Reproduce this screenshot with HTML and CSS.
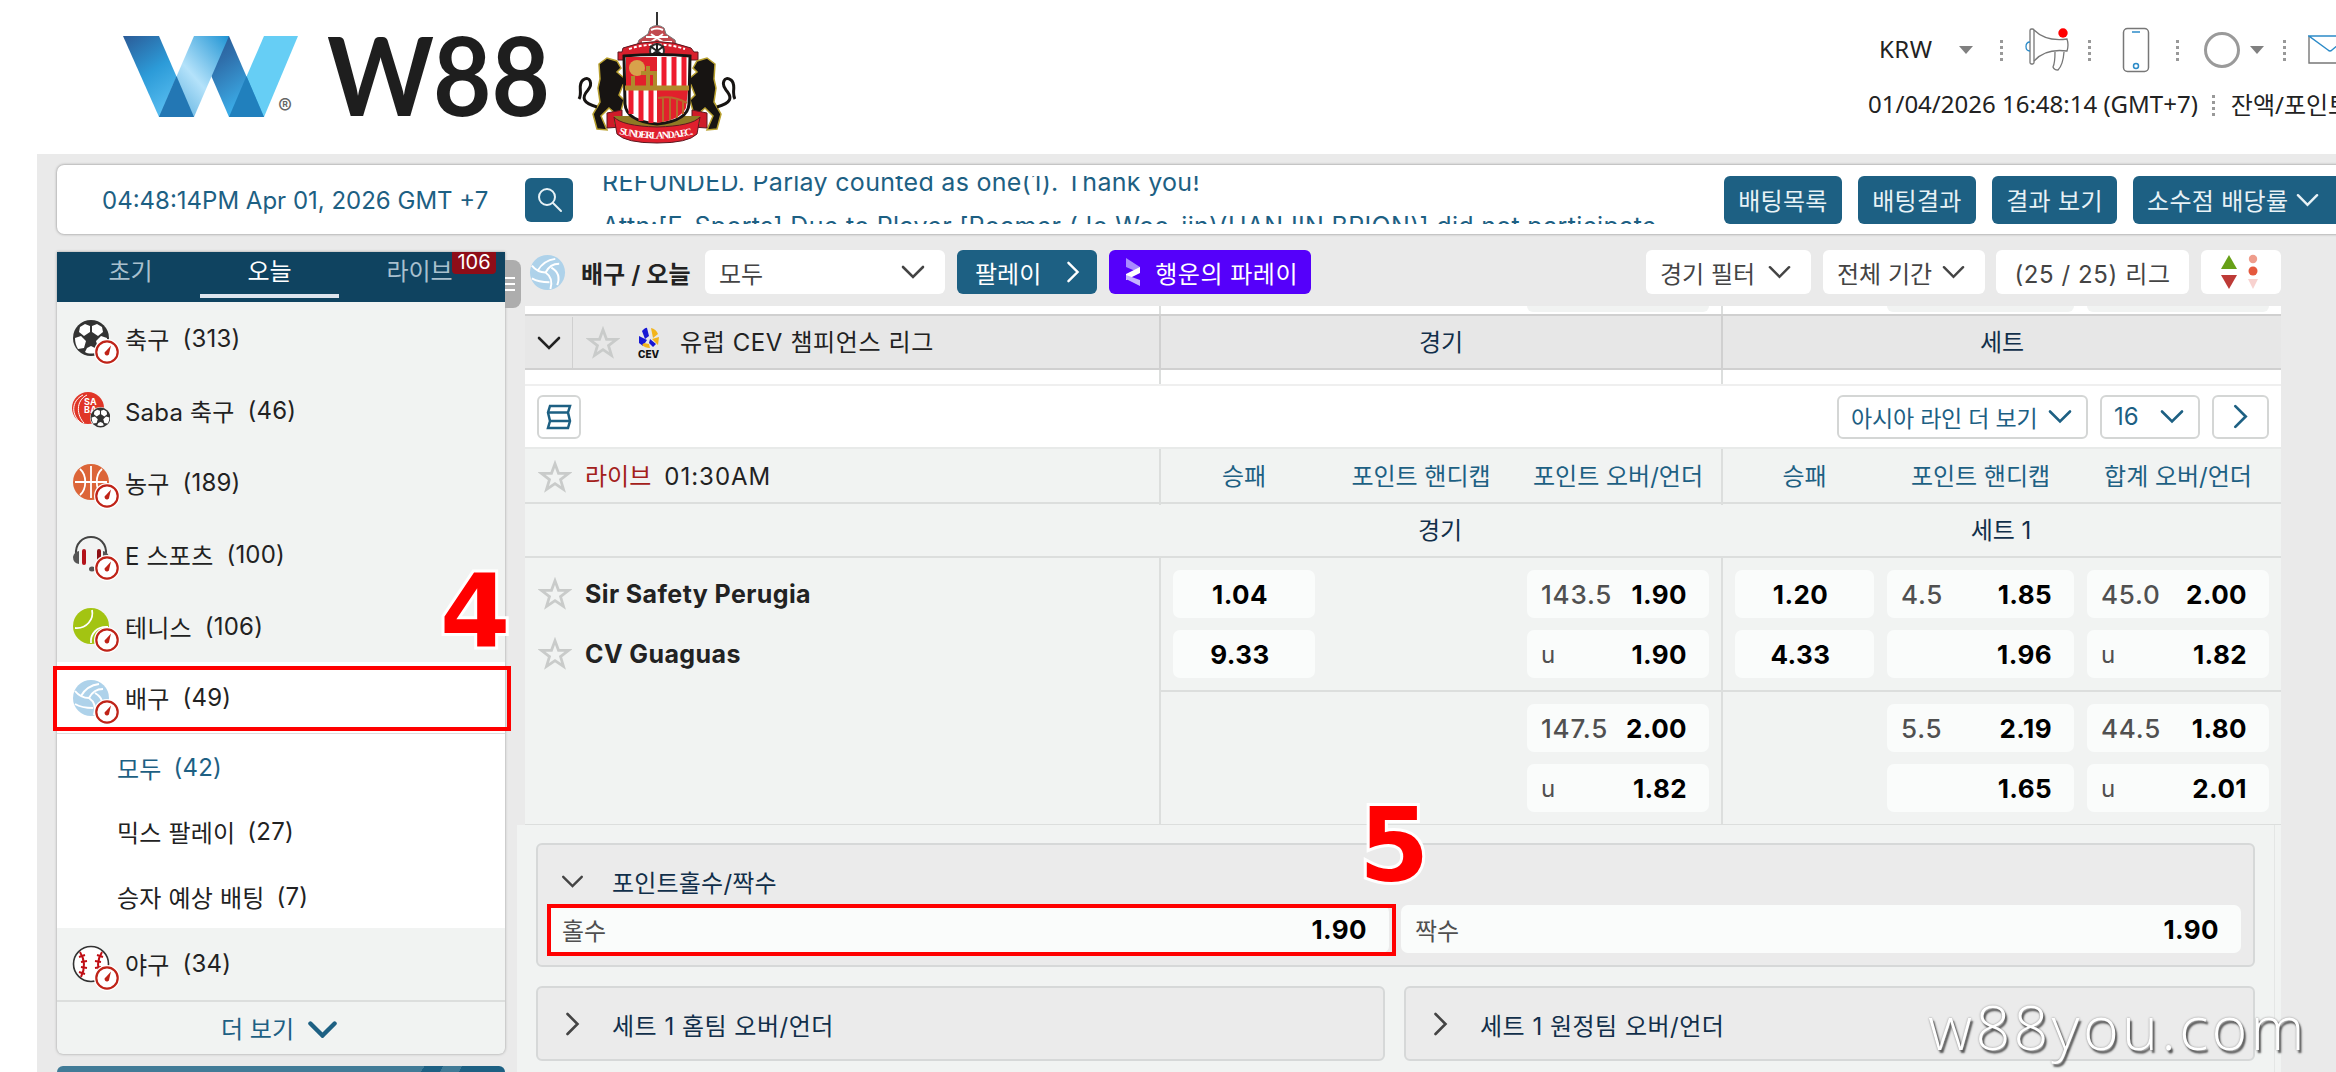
FILE: index.html
```
<!doctype html>
<html lang="ko">
<head>
<meta charset="utf-8" />
<title>W88 - 배구 / 오늘</title>
<link rel="stylesheet" href="styles.css">
</head>
<body>

<!-- icon sprite -->
<svg class="sprite" width="0" height="0">
	<symbol id="down" viewBox="0 0 24 14"><path d="M2 2l10 10L22 2" fill="none" stroke="currentColor" stroke-linecap="round"/></symbol>
	<symbol id="right" viewBox="0 0 14 24"><path d="M2 2l10 10L2 22" fill="none" stroke="currentColor" stroke-linecap="round"/></symbol>
	<symbol id="star" viewBox="0 0 32 32"><path d="M16 3.500l3.300 9h9.600l-7.700 5.900 2.800 9.300-8-5.500-8 5.500 2.800-9.300L3.100 12.500h9.600z" fill="none" stroke="currentColor"/></symbol>
	<symbol id="clock" viewBox="0 0 26 26"><circle cx="13" cy="13" r="13" fill="#fff"/><circle cx="13" cy="13" r="10.700" fill="#fff" stroke="#bf2318" stroke-width="2.200"/><path d="M17 6.500l-1.700 7.300a2.400 2.400 0 1 1-3.300-1.900z" fill="#bf2318"/></symbol>
	<symbol id="soccer" viewBox="0 0 38 38"><circle cx="19" cy="19" r="18" fill="#333"/><g fill="#fff"><path d="M13 5l5 2v6l-6 4-5-4 1-5zM25 5l5 3 1 5-5 4-6-4V7zM3 19l6-2 5 5-2 7-6 1c-2-3-3-7-3-11zM35 19l-6-2-5 5 2 7 6 1c2-3 3-7 3-11zM15 29l4-2 4 2 2 4c-3 2-9 2-12 0z"/></g></symbol>
	<symbol id="volley" viewBox="0 0 38 38"><circle cx="19" cy="19" r="18" fill="#aed2ea"/><g fill="none" stroke="#fff" stroke-width="2"><path d="M3 12c4 5 8 7 14 7M9 17C13 10 19 6 27 5M17 19c3-6 8-9 14-9M17 19c6 4 7 10 5 17M23 14c7 4 9 10 6 18M3 25c5 3 10 4 18 4"/></g></symbol>
</svg>

<header class="siteHeader">
	<div class="brand">
		<svg class="mark" width="178" height="84" viewBox="0 0 178 84">
			<defs>
				<linearGradient id="g1" x2=".6" y2="1"><stop stop-color="#2b5b97"/><stop offset=".5" stop-color="#2c9bd8"/><stop offset="1" stop-color="#5cc0f2"/></linearGradient>
				<linearGradient id="g2" x1="1" x2="0" y2="1"><stop stop-color="#1f94d4"/><stop offset=".5" stop-color="#b4e2fa"/><stop offset="1" stop-color="#3f9fd6"/></linearGradient>
				<linearGradient id="g3" x2=".6" y2="1"><stop stop-color="#274f8b"/><stop offset=".4" stop-color="#2f6fab"/><stop offset="1" stop-color="#3db5f0"/></linearGradient>
			</defs>
			<path d="M106 82h35L175 1h-34z" fill="#66cef5"/>
			<path d="M71 1h35l35 81h-35z" fill="url(#g3)"/>
			<path d="M106 82h35l-17.500-41z" fill="#2180bd"/>
			<path d="M0 1h36l35 81H36z" fill="url(#g1)"/>
			<path d="M36 82h35l35-81H71z" fill="url(#g2)"/>
			<path d="M36 82h35L53.500 41z" fill="#2377b4"/>
			<text x="155" y="79" class="reg">®</text>
		</svg>
		<svg class="wordmark" width="230" height="122" viewBox="0 0 230 122"><text x="0" y="106"><tspan textLength="107" lengthAdjust="spacingAndGlyphs">W</tspan><tspan x="106" textLength="117" lengthAdjust="spacingAndGlyphs">88</tspan></text></svg>
		<svg class="crest" width="160" height="134" viewBox="0 0 160 134">
			<path d="M81 2v14" stroke="#333" stroke-width="2"/>
			<path d="M74 18q7-5 14 0l2 6 9 6 2 8q-20-5-41 0l3-8 9-6z" fill="#c3494f" stroke="#777"/>
			<path d="M75 20q6-3 12 0M70 27h22M66 32h30M75 24l12 8M87 24l-12 8" stroke="#fff" stroke-width="2" fill="none"/>
			<path d="M47 38q34-13 68 0l3 4h4v8h-15l-6-5H61l-6 5H42v-8h4z" fill="#d8202d" stroke="#5c1820"/>
			<path d="M53 39q28-9 56 0" stroke="#fff" stroke-width="2" stroke-dasharray="3 2" fill="none"/>
			<circle cx="81" cy="41" r="7" fill="#fff" stroke="#333" stroke-width="2"/><path d="M74 36l14 10M88 36L74 46M81 33v16" stroke="#222" stroke-width="2"/>
			<g fill="#171412" stroke="#b8a02f" stroke-width="1.500">
				<path d="M23 54l8-6 10 3 4 7-4 4 6 5 6-6 3 5-9 9-4 10 5 5-3 11-5 3-7-6-8 8 6 14-10-1-4-15 7-12-2-14 2-9z"/>
				<path d="M139 54l-8-6-10 3-4 7 4 4-6 5-6-6-3 5 9 9 4 10-5 5 3 11 5 3 7-6 8 8-6 14 10-1 4-15-7-12 2-14-2-9z"/>
				<path d="M21 97c-14-4-16-9-9-17 5-6 2-15-5-10-6 5 0 12-4 19" fill="none" stroke="#171412" stroke-width="3"/>
				<path d="M141 97c14-4 16-9 9-17-5-6-2-15 5-10 6 5 0 12 4 19" fill="none" stroke="#171412" stroke-width="3"/>
			</g>
			<path d="M31 103l15-3v17l-15 1zM131 103l-15-3v17l15 1z" fill="#cf1b29" stroke="#5c1820"/>
			<path d="M38 106h86v8l-20 3H58l-20-3z" fill="#8f7a24"/>
			<path d="M48 46q34-3 66 0l-1 48q-1 17-32 20-31-3-32-20z" fill="#fff" stroke="#171412" stroke-width="3"/>
			<path d="M50 47h31v30H50z" fill="#e2202c"/>
			<circle cx="61" cy="58" r="8" fill="#d8a24b"/><path d="M57 66v12M65 63h14v14M72 56v20" stroke="#b08a2c" stroke-width="4" fill="none"/>
			<path d="M88 47v30M98 47v30M108 47v30M55 80v24M65 80v31M75 80v33" stroke="#ee1c2e" stroke-width="5"/>
			<path d="M81 80h31l-2 18q-6 12-29 15z" fill="#e2202c"/>
			<path d="M82 88q15-3 29 5M87 88v24M94 88v22M101 90v18M107 92v12" stroke="#b86a2c" stroke-width="2" fill="none"/>
			<path d="M49 78h64" stroke="#b08a2c" stroke-width="5"/>
			<path d="M38 107q8 9 43 10 35-1 43-10l-3 17q-9 9-40 9t-40-9z" fill="#e01f2d" stroke="#5c1820"/>
			<path id="scroll" d="M43 124q38 9 76 0" fill="none"/>
			<text class="motto"><textPath href="#scroll" textLength="75">SUNDERLAND A.F.C.</textPath></text>
		</svg>
	</div>
	<div class="account">
		<div class="accountTools">
			<span class="krw">KRW</span><i class="caret"></i><i class="dots"></i>
			<svg class="horn" width="46" height="46" viewBox="0 0 46 46" fill="none" stroke="#777" stroke-width="1.300"><rect x="5" y="2" width="4" height="35" rx="1.500"/><path d="M9 3c8 8 18 11 33 9q2 6 0 12c-15-2-25 1-33 10M30 25c0 6 0 11-2 15q1 3 5 3 5-5 6-18"/><path d="M5 15q-4 0-4 4.500T5 24" stroke="#2c8bc8"/><circle cx="38" cy="6" r="4.700" fill="#f00" stroke="none"/></svg>
			<i class="dots"></i>
			<svg class="phone" width="28" height="46" viewBox="0 0 28 46" fill="none" stroke="#777" stroke-width="1.500"><rect x="1.500" y="1.500" width="25" height="43" rx="4"/><path d="M10 5h8" stroke="#2c8bc8"/><circle cx="14" cy="39" r="2.500" stroke="#2c8bc8"/></svg>
			<i class="dots"></i><i class="ring"></i><i class="caret caretRing"></i><i class="dots"></i>
			<svg class="mail" width="42" height="30" viewBox="0 0 42 30" fill="none" stroke="#777" stroke-width="1.400"><path d="M1 1v27h40V1"/><path d="M1 1h40L24 15q-2 2-4 0z" stroke="#2c8bc8"/></svg>
		</div>
		<div class="accountInfo"><span class="stamp">01/04/2026 16:48:14 (GMT+7)</span><i class="dots"></i><span>잔액/포인트</span></div>
	</div>
</header>

<div class="stage">
	<div class="notice">
		<time>04:48:14PM Apr 01, 2026 GMT +7</time>
		<button class="btn search"><svg width="28" height="28" viewBox="0 0 28 28" fill="none" stroke="currentColor" stroke-width="2"><circle cx="12" cy="11" r="8"/><path d="M18 17l8 8" stroke-linecap="round"/></svg></button>
		<div class="ticker">
			<p>REFUNDED. Parlay counted as one(1). Thank you!</p>
			<p>Attn:[E-Sports] Due to Player [Roamer (Jo Woo-jin)(HANJIN BRION)] did not participate</p>
		</div>
		<button class="btn">배팅목록</button>
		<button class="btn">배팅결과</button>
		<button class="btn result">결과 보기</button>
		<button class="btn odds">소수점 배당률<svg width="23" height="14"><use href="#down"/></svg></button>
	</div>

	<div class="columns">
		<aside>
			<div class="sports">
				<nav class="tabs">
					<a>초기</a><a class="on">오늘</a><a>라이브<b>106</b></a>
				</nav>
				<i class="handle"></i>
				<ul>
					<li><span class="ico"><svg width="38" height="38"><use href="#soccer"/></svg><svg class="live" width="26" height="26"><use href="#clock"/></svg></span>축구<em>(313)</em></li>
					<li><span class="ico"><svg width="38" height="38" viewBox="0 0 38 38"><circle cx="16" cy="17" r="16" fill="#e03527"/><path d="M11 4c-12 6-12 20-2 28M15 4C3 10 5 25 12 32" fill="none" stroke="#fff"/><text x="12" y="14" class="saba">SA</text><text x="12" y="22" class="saba">BA</text><svg x="18" y="16" width="21" height="21"><circle cx="10.500" cy="10.500" r="10.500" fill="#f1f3f2"/><use href="#soccer"/></svg></svg></span>Saba 축구<em>(46)</em></li>
					<li><span class="ico"><svg width="38" height="38" viewBox="0 0 38 38"><circle cx="19" cy="19" r="18" fill="#dc6538"/><path d="M19 3v32M3 19h32M8 6c7 6 7 20 0 26M30 6c-7 6-7 20 0 26" fill="none" stroke="#fff" stroke-width="1.800"/></svg><svg class="live" width="26" height="26"><use href="#clock"/></svg></span>농구<em>(189)</em></li>
					<li><span class="ico"><svg width="38" height="38" viewBox="0 0 38 38"><path d="M4 20C2-4 36-4 34 20" fill="none" stroke="#444" stroke-width="2"/><path d="M7 16v13q-6-1-6-7 1-5 6-6zM31 16v13q6-1 6-7-1-5-6-6z" fill="#555"/><rect x="10" y="14" width="4" height="16" rx="2" fill="#b3121a"/><rect x="25" y="14" width="4" height="16" rx="2" fill="#8d1015"/><ellipse cx="20" cy="34" rx="3" ry="2.500" fill="#555"/></svg><svg class="live" width="26" height="26"><use href="#clock"/></svg></span>E 스포츠<em>(100)</em></li>
					<li><span class="ico"><svg width="38" height="38" viewBox="0 0 38 38"><circle cx="19" cy="19" r="18" fill="#a3c412"/><path d="M20 3c2 9-5 19-17 18M36 20c-11-1-18 7-17 16" fill="none" stroke="#fff" stroke-width="1.800"/></svg><svg class="live" width="26" height="26"><use href="#clock"/></svg></span>테니스<em>(106)</em></li>
					<li class="open"><span class="ico"><svg width="38" height="38"><use href="#volley"/></svg><svg class="live" width="26" height="26"><use href="#clock"/></svg></span>배구<em>(49)</em><i class="mark4"></i><strong class="num num4">4</strong></li>
				</ul>
				<ul class="sub">
					<li class="on">모두<em>(42)</em></li>
					<li>믹스 팔레이<em>(27)</em></li>
					<li>승자 예상 배팅<em>(7)</em></li>
				</ul>
				<ul>
					<li><span class="ico"><svg width="38" height="38" viewBox="0 0 38 38"><circle cx="19" cy="19" r="17.500" fill="#fff" stroke="#333" stroke-width="1.600"/><path d="M8 7c5 8 5 17 1 25M30 7c-5 8-5 17-1 25" fill="none" stroke="#c00f16" stroke-width="2"/><path d="M7 12l6-2M9 17l6-1M9 22l6 1M7 27l6 2M31 12l-6-2M29 17l-6-1M29 22l-6 1" stroke="#c00f16" stroke-width="2"/></svg><svg class="live" width="26" height="26"><use href="#clock"/></svg></span>야구<em>(34)</em></li>
				</ul>
				<a class="more">더 보기<svg width="29" height="17"><use href="#down"/></svg></a>
			</div>
			<div class="promo"></div>
		</aside>

		<main>
			<div class="filters">
				<svg width="37" height="37"><use href="#volley"/></svg>
				<h1>배구 / 오늘</h1>
				<span class="pick all">모두<svg width="24" height="14"><use href="#down"/></svg></span>
				<a class="parlay">팔레이<svg width="14" height="22"><use href="#right"/></svg></a>
				<a class="parlay lucky"><svg width="16" height="28" viewBox="0 0 16 28"><path d="M1 0l14 9v6L1 9z" fill="#a98bff"/><path d="M15 9v6L1 22v-6z" fill="#fff"/><path d="M1 17l14 5v6L1 21z" fill="#c7b3ff"/></svg>행운의 파레이</a>
				<span class="pick game">경기 필터<svg width="23" height="14"><use href="#down"/></svg></span>
				<span class="pick period">전체 기간<svg width="23" height="14"><use href="#down"/></svg></span>
				<span class="pick leagues">(25 / 25) 리그</span>
				<span class="pick sort"><svg width="46" height="38" viewBox="0 0 46 38"><path d="M3 16L11 2l8 14z" fill="#67a017"/><path d="M3 22l8 14 8-14z" fill="#bd3a36"/><circle cx="35" cy="6" r="4.200" fill="#ef9d8c"/><circle cx="35" cy="18" r="4.500" fill="#e5593d"/><path d="M30 26h10l-5 10z" fill="#f8d2cf"/></svg></span>
			</div>

			<div class="board">
				<div class="row peek"><div></div><div class="cells game3"><i></i><i></i><i class="pill"></i></div><div class="cells set3"><i></i><i class="pill"></i><i class="pill"></i></div></div>
				<div class="row league">
					<div class="name"><span class="fold"><svg width="24" height="14"><use href="#down"/></svg></span><svg class="star" width="34" height="34"><use href="#star"/></svg>
						<svg class="cev" width="24" height="32" viewBox="0 0 24 32"><path d="M5 4Q9 0 10 1l2 8-4 3zM2 9l8 4-4 6-4-3zM13 12l6 5-3 3-4-4z" fill="#1717d4"/><path d="M14 1q5 1 7 6l-5 4zM22 10l-1 8-6-6zM7 16l5 1 1 4q-5 0-8-3z" fill="#f2b41b"/><text x="1" y="31">CEV</text></svg>
						<span>유럽 CEV 챔피언스 리그</span></div>
					<div>경기</div><div>세트</div>
				</div>
				<div class="row gap"><div></div><div></div><div></div></div>
				<div class="tools">
					<span class="box stack"><svg width="26" height="26" viewBox="0 0 26 26" fill="none" stroke="currentColor" stroke-width="2.500"><path d="M4 2h20l-2 6.500 2 8.500-2 7H2l2-7-2-8.500z"/><path d="M2 8.500h20M4 17h20"/></svg></span>
					<span class="box lines">아시아 라인 더 보기<svg width="24" height="15"><use href="#down"/></svg></span>
					<span class="box page">16<svg width="24" height="15"><use href="#down"/></svg></span>
					<span class="box next"><svg width="15" height="25"><use href="#right"/></svg></span>
				</div>
				<div class="row head">
					<div class="name"><svg class="star" width="34" height="34"><use href="#star"/></svg><b>라이브</b><time>01:30AM</time></div>
					<div class="cells game3"><span>승패</span><span>포인트 핸디캡</span><span>포인트 오버/언더</span></div>
					<div class="cells set3"><span>승패</span><span>포인트 핸디캡</span><span>합계 오버/언더</span></div>
				</div>
				<div class="row half"><div></div><div>경기</div><div>세트 1</div></div>
				<div class="row match">
					<div class="teams">
						<p><svg class="star" width="34" height="34"><use href="#star"/></svg>Sir Safety Perugia</p>
						<p><svg class="star" width="34" height="34"><use href="#star"/></svg>CV Guaguas</p>
					</div>
					<div class="cells game3">
						<span class="pill solo">1.04</span><i></i><span class="pill"><s>143.5</s>1.90</span>
						<span class="pill solo">9.33</span><i></i><span class="pill"><s class="u">u</s>1.90</span>
					</div>
					<div class="cells set3">
						<span class="pill solo">1.20</span><span class="pill"><s>4.5</s>1.85</span><span class="pill"><s>45.0</s>2.00</span>
						<span class="pill solo">4.33</span><span class="pill"><s></s>1.96</span><span class="pill"><s class="u">u</s>1.82</span>
					</div>
					<div class="cells game3">
						<i></i><i></i><span class="pill"><s>147.5</s>2.00</span>
						<i></i><i></i><span class="pill"><s class="u">u</s>1.82</span>
					</div>
					<div class="cells set3">
						<i></i><span class="pill"><s>5.5</s>2.19</span><span class="pill"><s>44.5</s>1.80</span>
						<i></i><span class="pill"><s></s>1.65</span><span class="pill"><s class="u">u</s>2.01</span>
					</div>
				</div>
			</div>

			<div class="markets">
				<section class="wide">
					<h2><svg width="23" height="13"><use href="#down"/></svg>포인트홀수/짝수</h2>
					<div class="pair">
						<span class="pill"><s class="u">홀수</s>1.90<i class="mark5"></i><strong class="num num5">5</strong></span>
						<span class="pill"><s class="u">짝수</s>1.90</span>
					</div>
				</section>
				<section><h2><svg width="15" height="24"><use href="#right"/></svg>세트 1 홈팀 오버/언더</h2></section>
				<section><h2><svg width="15" height="24"><use href="#right"/></svg>세트 1 원정팀 오버/언더</h2></section>
			</div>
		</main>
	</div>
</div>

<div class="watermark">w88you.com</div>

</body>
</html>
```
FILE: styles.css
```
:root {
	--blue: #1d6083;
	--navy: #0f4360;
	--page: #eaeaea;
	--panel: #f1f3f2;
	--line: #dcdedd;
	font-family: Inter, "Noto Sans CJK KR", sans-serif;
	font-size: 24px;
	color: #222;
}

* {
	box-sizing: border-box;
}

body, html, p, h1, h2, ul {
	margin: 0;
	padding: 0;
}

body {
	width: 2336px;
	height: 1072px;
	overflow: hidden;
	position: relative;
	background: #fff;
}

ul { list-style: none; }
em, i, s { font-style: normal; text-decoration: none; }
svg { flex: none; display: block; }
use { stroke-width: 2.6; }
.sprite { position: absolute; }


/* Header */

.siteHeader {
	height: 154px;
	display: flex;
	justify-content: space-between;
	overflow: hidden;
}

.brand {
	display: flex;
	padding-left: 123px;
}

.mark { margin-top: 35px; }
.reg { font-size: 21px; fill: #666; }
.wordmark { margin: 10px 0 0 26px; }
.wordmark text { font: 700 110px Lato, sans-serif; fill: #1e1e1e; }
.crest { margin: 10px 0 0 19px; }
.motto { font: 700 10px "Liberation Serif", serif; fill: #fff; }

.account {
	width: 468px;
	font-family: "Noto Sans", "Noto Sans CJK KR", sans-serif;
}

.accountTools {
	display: flex;
	align-items: center;
	height: 50px;
	margin-top: 25px;
	padding-left: 11px;
}

.krw {
	flex: none;
	width: 80px;
	margin: -3px 0 0;
	letter-spacing: .5px;
}

.caret {
	flex: none;
	border: 7px solid transparent;
	border-top: 8px solid #808080;
	border-bottom: 0;
}

.dots {
	flex: none;
	width: 3px;
	height: 21px;
	margin-left: 27px;
	background: repeating-linear-gradient(#999 0 3px, transparent 3px 6px);
}

.krw + .caret { margin-left: 0; }
.horn { margin-left: 22px; }
.horn + .dots { margin-left: 17px; }
.phone { margin-left: 31px; }
.phone + .dots { margin-left: 26px; }

.ring {
	flex: none;
	width: 36px;
	height: 36px;
	margin-left: 25px;
	border: 3px solid #9a9a9a;
	border-radius: 50%;
}

.caretRing { margin-left: 10px; }
.caretRing + .dots { margin-left: 19px; }
.mail { margin-left: 22px; }

.accountInfo {
	display: flex;
	align-items: center;
	height: 56px;
	white-space: nowrap;
}

.accountInfo .dots { margin: 5px 16px 0 14px; }
.stamp { width: 330px; }


/* Announcement bar */

.stage {
	margin-left: 37px;
	height: 918px;
	padding: 11px 0 0 20px;
	background: var(--page);
}

.notice {
	display: flex;
	align-items: center;
	width: 2330px;
	height: 69px;
	background: #fff;
	border-radius: 7px;
	box-shadow: 0 0 3px rgba(0, 0, 0, .45);
	color: var(--blue);
}

.notice time {
	flex: none;
	width: 468px;
	padding: 2px 0 0 45px;
	white-space: nowrap;
}

.btn {
	flex: none;
	width: 118px;
	height: 48px;
	margin-right: 16px;
	padding: 0;
	border: 0;
	border-radius: 6px;
	background: var(--blue);
	color: #e8f2f6;
	font: inherit;
	letter-spacing: .3px;
}

.search {
	width: 48px;
	height: 44px;
	padding: 0 10px;
	margin-right: 29px;
}

.result { width: 125px; }

.odds {
	display: flex;
	align-items: center;
	gap: 8px;
	width: 240px;
	padding: 0 14px;
}

.ticker {
	flex: none;
	width: 1122px;
	height: 48px;
	overflow: hidden;
	white-space: nowrap;
	font-size: 25px;
	letter-spacing: .3px;
}

.ticker p {
	height: 43px;
	line-height: 44px;
	margin-top: -16px;
}

.ticker p + p { margin-top: 1px; }


/* Sidebar */

.columns {
	display: flex;
	margin-top: 18px;
}

aside {
	width: 448px;
	margin-right: 12px;
}

.sports {
	position: relative;
	height: 802px;
	background: var(--panel);
	box-shadow: 0 0 3px rgba(0, 0, 0, .35);
	border-radius: 0 0 6px 6px;
}

.tabs {
	display: flex;
	height: 50px;
	padding: 0 26px 0 4px;
	background: var(--navy);
	color: #a9c0ce;
}

.tabs a {
	position: relative;
	width: 139px;
	line-height: 40px;
	text-align: center;
}

.tabs .on {
	height: 46px;
	border-bottom: 4px solid #dde5ee;
	color: #fff;
}

.tabs a:last-child { padding-left: 22px; }

.tabs b {
	position: absolute;
	top: 0;
	left: 113px;
	width: 44px;
	height: 22px;
	border-radius: 0 0 4px 4px;
	background: #8e0d18;
	color: #fff;
	font-size: 20px;
	font-weight: 400;
	line-height: 21px;
}

.handle {
	position: absolute;
	left: 448px;
	top: 8px;
	width: 16px;
	height: 48px;
	border-radius: 0 8px 8px 0;
	background: repeating-linear-gradient(#fff 0 2px, #adadad 2px 6px) 0 17px / 10px 14px no-repeat, #adadad;
}

.sports li {
	position: relative;
	display: flex;
	align-items: center;
	height: 72px;
	padding-left: 15px;
	letter-spacing: .2px;
}

.sports em { margin-left: 13px; }

.ico {
	position: relative;
	width: 38px;
	height: 38px;
	margin-right: 15px;
}

.live {
	position: absolute;
	left: 22px;
	top: 20px;
}

.saba { font-size: 9px; font-weight: 700; fill: #fff; }

.sports .open {
	background: #fff;
	border-bottom: 1px solid #ddd;
}

.sports .sub { background: #fff; }

.sports .sub li {
	height: 64.6px;
	padding: 2px 0 0 60px;
}

.sub em { margin-left: 12px; }
.sub .on { color: var(--blue); }

.more {
	display: flex;
	align-items: center;
	justify-content: center;
	gap: 14px;
	height: 54px;
	padding-right: 4px;
	border-top: 2px solid var(--line);
	color: var(--blue);
}

.more svg { margin-top: 3px; }
.more use { stroke-width: 3.6; }

.promo {
	height: 40px;
	margin-top: 12px;
	border-radius: 6px;
	background: linear-gradient(120deg, #417b97 78%, var(--blue) 78% 82%, #417b97 82% 86%, var(--blue) 86%);
}


/* Numbered callouts */

.mark4, .mark5 {
	position: absolute;
	border: 4px solid #f00;
}

.mark4 {
	left: -4px;
	top: 4px;
	width: 458px;
	height: 65px;
}

.mark5 {
	left: -1px;
	top: -1px;
	width: 849px;
	height: 52px;
}

.num {
	position: absolute;
	z-index: 2;
	font: 700 101px/1 "DejaVu Sans", sans-serif;
	color: #f00;
	letter-spacing: 0;
	-webkit-text-stroke: 6px #fff;
	paint-order: stroke fill;
}

.num4 {
	left: 383px;
	top: -100px;
}

.num5 {
	left: 811px;
	top: -109px;
}


/* Filter bar */

main {
	flex: none;
	width: 1764px;
}

.filters {
	display: flex;
	align-items: center;
	height: 54px;
	padding: 0 0 14px 12px;
}

.filters h1 {
	width: 124px;
	margin: 0 0 0 15px;
	font-size: 24px;
	font-weight: 600;
	white-space: nowrap;
}

.pick, .parlay {
	flex: none;
	display: flex;
	align-items: center;
	justify-content: space-between;
	height: 44px;
	margin-right: 12px;
	padding: 0 20px 0 14px;
	border-radius: 6px;
	background: #fff;
	color: #444;
}

.all { width: 240px; }

.parlay {
	width: 140px;
	padding: 0 17px 0 18px;
	background: var(--blue);
	color: #fff;
}

.lucky {
	width: 202px;
	padding: 0 13px 0 16px;
	background: #5500fa;
	letter-spacing: .5px;
	margin-right: auto;
}

.game { width: 165px; }
.period { width: 162px; margin-right: 11px; }

.leagues {
	width: 193px;
	padding: 0;
	justify-content: center;
	letter-spacing: .6px;
}

.sort { width: 80px; margin-right: 0; padding: 0 17px; }


/* Odds board */

.board {
	width: 1756px;
	margin-left: 8px;
	background: #fff;
}

.row {
	display: grid;
	grid-template-columns: 634px 562px 560px;
}

.row > div + div { border-left: 2px solid var(--line); }

.cells {
	display: grid;
	text-align: center;
	align-content: start;
	row-gap: 12px;
}

.game3 {
	grid-template-columns: 142px 188px 182px;
	column-gap: 12px;
	padding-left: 12px;
}

.set3 {
	grid-template-columns: 139px 187px 182px;
	column-gap: 13px;
	padding-left: 12px;
}

.peek { height: 8px; }

.peek .pill {
	height: 6px;
	background: var(--panel);
	border-radius: 0 0 6px 6px;
}

.league {
	height: 56px;
	border: solid #d0d0d0;
	border-width: 2px 0;
	background: #e7e7e7;
	color: #112f4a;
	line-height: 53px;
	text-align: center;
}

.league > div + div { border-color: #d0d0d0; }

.name {
	display: flex;
	align-items: center;
	color: #222;
}

.league .name span { letter-spacing: .6px; }

.fold {
	width: 48px;
	height: 52px;
	padding: 19px 0 0 12px;
	margin-right: 13px;
	border-right: 1px solid #d0d0d0;
}

.star { color: #c9cbca; }

.cev { margin: 0 19px 0 17px; }
.cev text { font: 800 10px Inter, sans-serif; fill: #111; }

.gap { height: 16px; border-bottom: 2px solid #efefef; }

.tools {
	display: flex;
	align-items: center;
	gap: 12px;
	height: 63px;
	padding: 0 12px;
	border-bottom: 2px solid #e8eae9;
	color: var(--blue);
}

.box {
	display: flex;
	align-items: center;
	justify-content: space-between;
	height: 44px;
	padding: 0 14px 0 12px;
	border: 2px solid #d4d6d5;
	border-radius: 6px;
}

.stack { width: 44px; margin-right: auto; padding: 0 7px; }
.lines { width: 251px; font-size: 23px; letter-spacing: -.2px; }
.page { width: 100px; }
.next { width: 57px; padding: 0 19px; }

.head {
	height: 55px;
	background: var(--panel);
	border-bottom: 2px solid var(--line);
	color: var(--blue);
	line-height: 56px;
}

.head .name { padding-left: 13px; height: 55px; }
.head time { letter-spacing: 1px; }

.head b {
	margin: 0 13px;
	font-weight: 400;
	color: #a3201a;
}

.half {
	height: 54px;
	background: var(--panel);
	border-bottom: 2px solid var(--line);
	color: #112f4a;
	line-height: 53px;
	text-align: center;
}

.half > div + div { border: 0; }

.match {
	background: var(--panel);
	border-bottom: 1px solid var(--line);
}

.match .cells {
	height: 132px;
	padding-top: 12px;
}

.match .cells:nth-child(-n + 3) {
	height: 134px;
	border-bottom: 2px solid var(--line);
}

.teams {
	grid-row: span 2;
	padding: 12px 0 0 13px;
	font-size: 25px;
	font-weight: 700;
	letter-spacing: .4px;
}

.teams p {
	display: flex;
	align-items: center;
	gap: 13px;
	height: 48px;
	margin-bottom: 12px;
}

.pill {
	position: relative;
	display: flex;
	align-items: center;
	justify-content: space-between;
	height: 48px;
	padding: 1px 22px 0 14px;
	border-radius: 7px;
	background: #fafcfb;
	color: #000;
	font-size: 26px;
	font-weight: 700;
	letter-spacing: .4px;
}

.solo {
	justify-content: center;
	padding: 1px 8px 0 0;
}

.pill s {
	font-weight: 500;
	color: #505050;
	letter-spacing: .8px;
}

.pill .u {
	font-size: 24px;
	font-weight: 400;
	letter-spacing: 0;
}


/* Extra markets */

.markets {
	display: grid;
	grid-template-columns: 849px 851px;
	gap: 19px;
	height: 248px;
	padding: 18px 0 0 19px;
	background: linear-gradient(90deg, var(--panel) 1757px, #e4e6e5 1757px 1758px, var(--panel) 1758px);
	align-content: start;
}

.markets section {
	height: 75px;
	border: 2px solid #d6d8d8;
	border-radius: 6px;
	background: #ebebeb;
}

.markets .wide {
	grid-column: span 2;
	height: 124px;
}

.markets h2 {
	display: flex;
	align-items: center;
	height: 72px;
	padding-left: 27px;
	font-size: 24px;
	font-weight: 400;
	letter-spacing: .5px;
	color: #112f4a;
}

.markets h2 svg { margin-right: 32px; color: #444; }

.markets .wide h2 {
	padding: 0 0 0 23px;
	letter-spacing: .2px;
}

.markets .wide h2 svg { margin-right: 28px; }

.pair {
	display: grid;
	grid-template-columns: 841px 840px;
	gap: 12px;
	margin: -12px 0 0 10px;
}

.watermark {
	position: absolute;
	left: 1928px;
	top: 985px;
	font: 300 61px/84px "Open Sans", sans-serif;
	color: #fff;
	text-shadow: 2px 3px 2px #555, 0 0 2px #888;
	letter-spacing: 3.3px;
}
```
